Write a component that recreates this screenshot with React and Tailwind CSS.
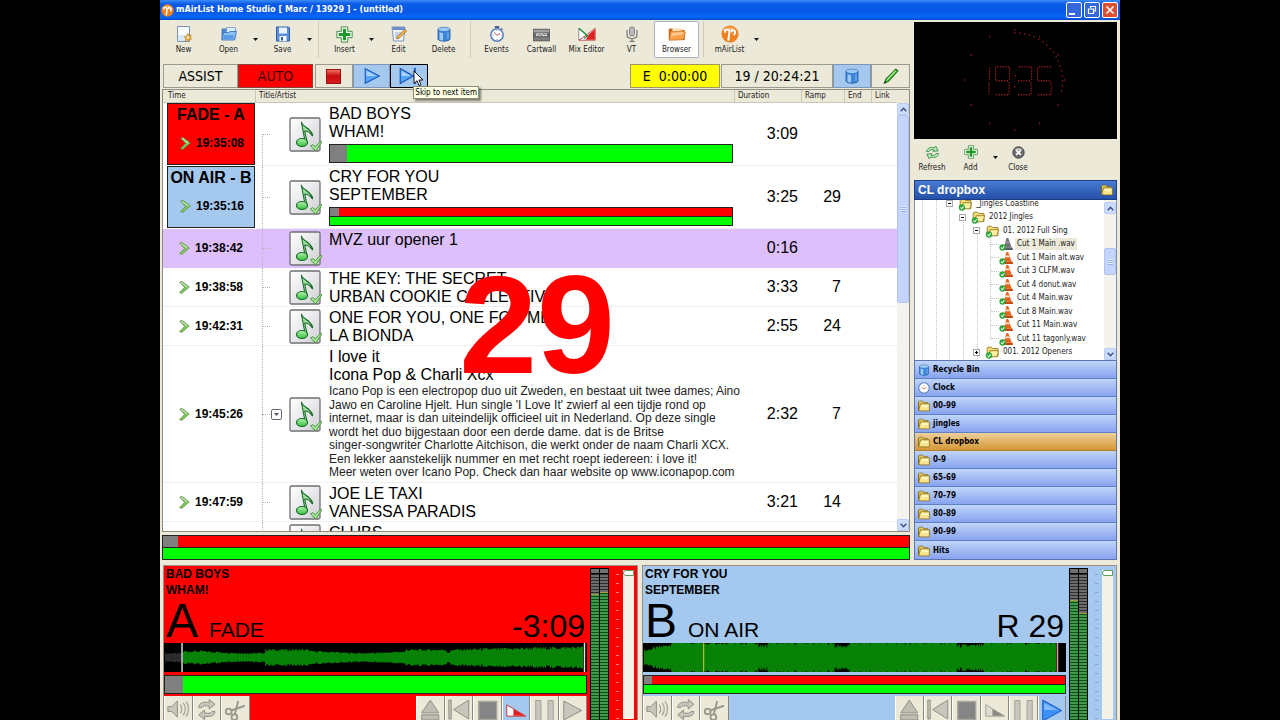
import React from 'react';

const UI = "font-['DejaVu_Sans_Condensed','Open_Sans',sans-serif]";
const ARIAL = "font-['Liberation_Sans',Arial,sans-serif]";

/* ---------- icons ---------- */

const Svg = ({ s = 16, children, className = '' }) => (
  <svg width={s} height={s} viewBox="0 0 16 16" className={`shrink-0 ${className}`} aria-hidden="true">
    {children}
  </svg>
);

const NewIcon = () => (
  <Svg>
    <path d="M1.5.5h12v15h-12z" fill="#f7fbff" stroke="#7d93b0" />
    <path d="M2 9h11v6H2z" fill="#dbe8f7" />
    <path d="M12 7.5l1 2.3 2.4-.6-1.2 2.1 1.6 1.7-2.4.3-.4 2.4-1.6-1.8-2.3.9.8-2.3-1.8-1.5 2.4-.6z" fill="#f2b43c" stroke="#b8761a" strokeWidth=".6" />
    <circle cx="12" cy="11.5" r="1.3" fill="#fff3c0" />
  </Svg>
);
const OpenIcon = () => (
  <Svg>
    <path d="M1 3h5l1 1.500h7V13H1z" fill="#4f8fd8" stroke="#2a62a8" strokeWidth=".7" />
    <path d="M5.500 1.500h9v6h-9z" fill="#dceafa" stroke="#5b8cc4" strokeWidth=".7" />
    <path d="M.7 14l1.800-7.500h5L9 5.500h6.500L13.500 14z" fill="#8fc0f2" stroke="#2f6fbd" strokeWidth=".8" />
    <path d="M2 13l1-4h10l-1 4z" fill="#5a9ee6" />
  </Svg>
);
const SaveIcon = () => (
  <Svg>
    <path d="M1.500 1h12l1 1v13h-13z" fill="#5b8fdc" stroke="#2f5ca8" />
    <path d="M4 1.500h8v6H4z" fill="#e8f1fc" />
    <path d="M4.500 10h7v5h-7z" fill="#f6f9fd" />
    <path d="M6 11h2v3.500H6z" fill="#2f5ca8" />
  </Svg>
);
const PlusIcon = ({ s = 17 }) => (
  <Svg s={s}>
    <path d="M5 .8h6V5h4.200v6H11v4.200H5V11H.8V5H5z" fill="#fff" stroke="#3c8c3c" strokeWidth=".9" strokeLinejoin="round" />
    <path d="M6.500 2.500h3v4h4v3h-4v4h-3v-4h-4v-3h4z" fill="#1f9a28" />
  </Svg>
);
const EditIcon = () => (
  <Svg>
    <path d="M1 1h13l-1.500 14h-10z" fill="#eef3fb" stroke="#6a7fa8" strokeWidth=".8" />
    <path d="M1 1h13l-.4 3H1.500z" fill="#6d8fd0" />
    <path d="M4 7h6M4 9h5M4 11h5" stroke="#8a9cc0" strokeWidth=".8" />
    <path d="M14 3.500l1.700 1.600-7.500 7-2.600.9.800-2.500z" fill="#f5b840" stroke="#8a5a1a" strokeWidth=".7" />
  </Svg>
);
const BinIcon = ({ s = 16 }) => (
  <Svg s={s}>
    <path d="M2 3.200C3 .6 13 .6 14 3.200v10c-1 2.600-11 2.600-12 0z" fill="#3f86d6" stroke="#1f57a0" strokeWidth=".8" />
    <ellipse cx="8" cy="3.200" rx="5.600" ry="1.900" fill="#9ccaf5" />
    <path d="M3.500 6v7.500c1 .7 2 .9 3.500 1V7C5.500 6.900 4.500 6.600 3.500 6z" fill="#9ccaf5" />
    <path d="M12 6.500v6.500" fill="none" stroke="#7ab4ee" strokeWidth="1.200" />
  </Svg>
);
const ClockIcon = ({ s = 16, top = true }) => (
  <Svg s={s}>
    {top && <path d="M6 0h4v2H6zM12.200 2l1.500 1.300-1 1z" fill="#50608a" stroke="#50608a" strokeWidth=".5" />}
    <circle cx="8" cy={top ? 9 : 8} r={top ? 6.2 : 7} fill="#fff" stroke="#5a7fc0" strokeWidth="1.500" />
    <path d="M5 6.500L8 9.300l3-2" fill="none" stroke="#c04848" strokeWidth=".9" />
    <path d="M8 4v1M8 13v1M3.500 9h1M11.500 9h1" stroke="#6a7894" strokeWidth=".8" />
  </Svg>
);
const CartIcon = () => (
  <Svg s={17}>
    <path d="M0 3h16v11H0z" fill="#6a6a6a" stroke="#3c3c3c" strokeWidth=".6" />
    <path d="M.5 3.500h15v2.500H.5z" fill="#a2a2a2" />
    <path d="M3 7h10v2.500H3z" fill="#e6e6e6" />
    <path d="M4 9.500l2-1.500 2 1 2-1.500 2 1" stroke="#444" fill="none" strokeWidth=".8" />
    <path d="M.5 11h15v2.500H.5z" fill="#808080" />
  </Svg>
);
const MixIcon = () => (
  <Svg s={18}>
    <path d="M.7 3v10.500L8 9z" fill="#fff" stroke="#777" strokeWidth=".7" />
    <path d="M15.300 3v10.500H1z" fill="#fff" stroke="#b03030" strokeWidth=".7" />
    <path d="M15 3.800V13H7L9.500 8.500z" fill="#e02020" />
    <path d="M.9 3l7.500 6.500L5.500 12" fill="none" stroke="#1e9040" strokeWidth="1.200" />
  </Svg>
);
const MicIcon = () => (
  <Svg>
    <rect x="5.500" y="1" width="5" height="9" rx="2.500" fill="#a8a8a8" stroke="#606060" strokeWidth=".7" />
    <path d="M7 2v7M9 2v7" stroke="#e8e8e8" strokeWidth=".6" />
    <path d="M3 4v4.500C3 11.500 5 12.500 8 12.500s5-1 5-4V4M8 12.500V15M5.500 15.300h5" fill="none" stroke="#777" strokeWidth="1.200" />
  </Svg>
);
const BrowserIcon = () => (
  <Svg s={18}>
    <path d="M1 3.500h5l1 1.200h7.500V13H1z" fill="#d9711a" stroke="#b0540c" strokeWidth=".6" />
    <path d="M4 2.500h8v4H4z" fill="#fde6c8" />
    <path d="M1.200 13.500L2.500 6l11.500-.800 1.500 1.500L13.500 13z" fill="#f7a24c" stroke="#d0701c" strokeWidth=".6" />
    <path d="M3 7l10.500-.700-.4 2L2.800 10z" fill="#fdc98c" />
  </Svg>
);
const MAirIcon = ({ s = 18 }) => (
  <Svg s={s}>
    <circle cx="8" cy="8" r="7.600" fill="#f08020" />
    <path d="M1.500 5.500a7.500 7.500 0 0 1 13 0C11 3.500 5 3.500 1.500 5.500z" fill="#f8a858" />
    <path d="M3 5.500c2-1.800 4-1.500 4.600 0L6.500 14M9 5c2-.8 3.800 0 3.500 1.800L11.500 9" fill="none" stroke="#fff" strokeWidth="1.800" />
    <path d="M3.200 3.800l.6 3.200M9 3.500l.6 3" fill="none" stroke="#fff" strokeWidth="1.200" />
  </Svg>
);
const RefreshIcon = () => (
  <Svg s={15}>
    <path d="M1.500 7C2 3.500 6 1.500 10 3.200l1.500-2 2.500 5-5.500.6 1-1.700C7 4.300 4.500 5 4 7z" fill="#bfe6bf" stroke="#2c8a3c" strokeWidth=".9" />
    <path d="M14.500 9c-.5 3.500-4.500 5.500-8.500 3.800l-1.500 2-2.500-5 5.500-.6-1 1.700c2.500.8 5 .1 5.500-1.900z" fill="#bfe6bf" stroke="#2c8a3c" strokeWidth=".9" />
  </Svg>
);
const CloseIcon = () => (
  <Svg s={13}>
    <circle cx="8" cy="8" r="7" fill="#6e6e6e" stroke="#333" />
    <path d="M3 5a6 6 0 0 1 10 0z" fill="#c8c8c8" />
    <path d="M5 5l6 6M11 5l-6 6" stroke="#fff" strokeWidth="2" />
  </Svg>
);
const FolderIcon = ({ s = 12 }) => (
  <Svg s={s}>
    <path d="M.8 14V3l1-1.500h4.500l1.500 2h5V5" fill="#e8cc60" stroke="#806818" />
    <path d="M.8 14V3" stroke="#806818" />
    <path d="M3.500 5h11.700v9.500H4.500L.8 14z" fill="#f6e48e" stroke="#806818" strokeLinejoin="round" />
    <path d="M5 7h8.500v2.500H5z" fill="#fff6c0" />
  </Svg>
);
const TreeFolderIcon = () => (
  <Svg s={14}>
    <path d="M2.500 13V3.500l1-1h4l1.300 1.500h6V13z" fill="#f3dc74" stroke="#8a7018" strokeWidth=".9" />
    <path d="M4 13.500l2-7h9.500l-1.800 7z" fill="#fff0a0" stroke="#8a7018" strokeWidth=".9" />
    <circle cx="4.500" cy="12" r="3.600" fill="#2fa53a" />
    <path d="M2.800 12l1.400 1.400 2.400-2.800" fill="none" stroke="#fff" strokeWidth="1.200" />
  </Svg>
);
const ConeIcon = ({ gray }) => (
  <Svg s={14}>
    <path d="M8.500 1h2l4 11h-9z" fill={gray ? '#707078' : '#e8641c'} />
    <path d="M7.500 5h4l.9 2.200H6.700z" fill={gray ? '#9a9aa2' : '#ffe9d8'} />
    <path d="M4 12h11.500l.5 2.800H3.500z" fill={gray ? '#5a5a60' : '#c8480c'} />
    <circle cx="4" cy="12" r="3.600" fill="#2fa53a" />
    <path d="M2.300 12l1.400 1.400 2.400-2.800" fill="none" stroke="#fff" strokeWidth="1.200" />
  </Svg>
);
const PencilIcon = () => (
  <Svg s={18}>
    <path d="M12.200 2l2 1.500-8.500 9.300L2 14.500l1.500-3.800z" fill="#4fc43c" stroke="#1d6e18" strokeWidth=".9" />
    <path d="M12 3.500L4.500 11.500" stroke="#b8f0a0" strokeWidth="1" />
    <path d="M2 14.500l.8-2 1.200 1.200z" fill="#222" />
  </Svg>
);
const ArrowIcon = () => (
  <svg width="11" height="13" viewBox="0 0 11 13" className="shrink-0" aria-hidden="true">
    <path d="M.7 1L3.200.5 10.300 6 2.700 12.500.5 11.500 5.500 6.500z" fill="#7fc45c" stroke="#5b8a48" strokeWidth=".7" />
    <path d="M2 1.300L8.500 6" stroke="#d8f5c8" strokeWidth="1" />
  </svg>
);
const NoteIcon = () => (
  <svg width="33" height="35" viewBox="0 0 33 35" className="shrink-0" aria-hidden="true">
    <defs>
      <linearGradient id="tile" x1="0" y1="0" x2="1" y2="1">
        <stop offset="0" stopColor="#ffffff" />
        <stop offset="1" stopColor="#cfd0d4" />
      </linearGradient>
      <linearGradient id="note" x1="0" y1="0" x2="0" y2="1">
        <stop offset="0" stopColor="#b8f0b0" />
        <stop offset="1" stopColor="#2fc03c" />
      </linearGradient>
    </defs>
    <rect x="1" y="1" width="30" height="33" rx="1.500" fill="url(#tile)" stroke="#6f6f74" strokeWidth="1.300" />
    <path d="M12.300 5c1 5 8.500 5.500 11.200 12.500.3 1 .1 1.800-.5 1-2.500-4-5-4.500-7.300-4.500l2.500 11.500-1.800.5z" fill="#9fe0a0" stroke="#176b2a" strokeWidth="1.100" strokeLinejoin="round" />
    <ellipse cx="13" cy="25.500" rx="5.500" ry="4" fill="url(#note)" stroke="#176b2a" strokeWidth="1.200" />
    <path d="M21.500 29l2-1.500 2.800 2.300L31.800 24l1 1-6 9z" fill="#a4e890" stroke="#3f8a38" strokeWidth=".9" />
  </svg>
);
const PlayIcon = () => (
  <Svg s={18}>
    <path d="M2 1.500L14.500 8 2 14.500z" fill="#58a4f4" stroke="#1a58c0" />
    <path d="M3 3.200L12 8H3z" fill="#a8d2fc" />
  </Svg>
);
const SkipIcon = () => (
  <Svg s={20}>
    <path d="M1 2l10.500 6L1 14z" fill="#58a4f4" stroke="#1a58c0" />
    <path d="M2 3.700L9.500 8H2z" fill="#a8d2fc" />
    <path d="M12.700 1.500v13" stroke="#1a58c0" strokeWidth="1.600" />
  </Svg>
);

/* ---------- toolbar ---------- */

const Tool = ({ icon, label, active, className = 'w-[45px]' }) => (
  <button
    type="button"
    className={`flex h-[37px] shrink-0 flex-col items-center justify-end gap-[1px] pb-[3px] text-[8px] leading-[10px] whitespace-nowrap text-[#222] ${
      active ? 'rounded-[2px] bg-white ring-1 ring-[#a8b4c4] ring-inset' : ''
    } ${className}`}
  >
    <span className="flex h-5 items-center">{icon}</span>
    {label}
  </button>
);
const Drop = ({ label }) => (
  <button type="button" aria-label={label} className="flex h-[37px] w-[9px] shrink-0 items-center justify-center">
    <svg width="5" height="3" viewBox="0 0 5 3"><path d="M0 0h5L2.500 3z" fill="#111" /></svg>
  </button>
);
const Sep = () => (
  <span className="flex h-[37px] w-2 shrink-0 justify-center"><span className="w-px bg-[#cfccbb]" /></span>
);

/* ---------- playlist ---------- */

const rows = [
  { h: 'h-[63px]', time: '19:35:08', state: 'FADE - A', box: 'bg-[#ff0000]', title: 'BAD BOYS', artist: 'WHAM!', dur: '3:09', bar: 'full', first: true },
  { h: 'h-[63px]', time: '19:35:16', state: 'ON AIR - B', box: 'bg-[#a4c8ee]', title: 'CRY FOR YOU', artist: 'SEPTEMBER', dur: '3:25', ramp: '29', bar: 'split' },
  { h: 'h-[39px]', time: '19:38:42', title: 'MVZ uur opener 1', dur: '0:16', tint: true },
  { h: 'h-[39px]', time: '19:38:58', title: 'THE KEY: THE SECRET', artist: 'URBAN COOKIE COLLECTIVE', dur: '3:33', ramp: '7' },
  { h: 'h-[39px]', time: '19:42:31', title: 'ONE FOR YOU, ONE FOR ME', artist: 'LA BIONDA', dur: '2:55', ramp: '24' },
  {
    h: 'h-[137px]', time: '19:45:26', title: 'I love it', artist: 'Icona Pop & Charli Xcx', dur: '2:32', ramp: '7',
    text: [
      'Icano Pop is een electropop duo uit Zweden, en bestaat uit twee dames; Aino',
      "Jawo en Caroline Hjelt. Hun single 'I Love It' zwierf al een tijdje rond op",
      'internet, maar is dan uiteindelijk officieel uit in Nederland. Op deze single',
      'wordt het duo bijgestaan door een derde dame. dat is de Britse',
      'singer-songwriter Charlotte Aitchison, die werkt onder de naam Charli XCX.',
      'Een lekker aanstekelijk nummer en met recht roept iedereen: i love it!',
      'Meer weten over Icano Pop. Check dan haar website op www.iconapop.com',
    ],
  },
  { h: 'h-[39px]', time: '19:47:59', title: 'JOE LE TAXI', artist: 'VANESSA PARADIS', dur: '3:21', ramp: '14' },
  { h: 'h-[39px]', title: 'CLUBS' },
];

const SplitBar = ({ gray, className }) => (
  <div className={`flex flex-col border border-[#222] ${className}`}>
    <div className="flex flex-1 border-b border-[#222] bg-[#ff0000]"><span className={`${gray} bg-[#808080]`} /></div>
    <div className="flex-1 bg-[#00ff00]" />
  </div>
);
const FullBar = ({ gray, className }) => (
  <div className={`flex border border-[#222] bg-[#00ff00] ${className}`}><span className={`${gray} bg-[#808080]`} /></div>
);

const Row = ({ r }) => {
  const line = r.tint ? 'border-[#dcbffb]' : 'border-[#f0f0f0]';
  return (
    <tr className={r.tint ? 'bg-[#dcbffb]' : 'bg-white'}>
      <td className="p-0 align-top">
        <div className={`flex ${r.h} pr-px pl-1 ${r.state ? 'pb-px' : `border-b ${line}`}`}>
          <div className={`flex flex-1 flex-col justify-center ${r.state ? `border border-[#222] pb-[2px] ${r.box}` : ''}`}>
            {r.state && <div className="-mt-1 text-center text-[16px] leading-[24px] font-bold whitespace-nowrap">{r.state}</div>}
            {r.time && (
              <div className={`flex items-center gap-[5px] pl-3 text-[12px] font-bold ${r.state ? 'h-8' : ''}`}>
                <ArrowIcon />
                {r.time}
              </div>
            )}
          </div>
        </div>
      </td>
      <td className="p-0 align-top">
        <div className={`flex ${r.h} border-b ${line}`}>
          <div className="relative flex w-[33px] shrink-0 items-center pl-1.5">
            <span className={`absolute bottom-0 left-1.5 border-l border-dotted border-[#b4b4b4] ${r.first ? 'top-1/2' : 'top-0'}`} />
            <span className="w-2 border-t border-dotted border-[#b4b4b4]" />
            {r.text && (
              <button type="button" aria-label="Collapse comment" className="ml-px flex size-[11px] items-center justify-center rounded-[2px] border border-[#667] bg-white">
                <svg width="5" height="3" viewBox="0 0 5 3"><path d="M0 0h5L2.500 3z" fill="#556" /></svg>
              </button>
            )}
          </div>
          <div className="flex shrink-0 items-center"><NoteIcon /></div>
          <div className="min-w-0 flex-1 pt-0.5 pr-0.5 pl-[7px] text-[16px] leading-[18px] whitespace-nowrap">
            <div>{r.title}</div>
            <div>{r.artist}</div>
            {r.bar === 'full' && <FullBar gray="w-[17px]" className="mt-[3px] h-[19px]" />}
            {r.bar === 'split' && <SplitBar gray="w-[9px]" className="mt-[3px] h-[19px]" />}
            {r.text && (
              <div className="grid h-[95px] auto-rows-fr text-[12px] leading-[14px] text-[#222]">
                {r.text.map((t) => <div key={t}>{t}</div>)}
              </div>
            )}
          </div>
        </div>
      </td>
      <td className={`border-b p-0 pr-1 text-right align-middle text-[16px] ${line}`}>{r.dur}</td>
      <td className={`border-b p-0 pr-1 text-right align-middle text-[16px] ${line}`}>{r.ramp}</td>
      <td className={`border-b p-0 ${line}`} />
      <td className={`border-b p-0 ${line}`} />
    </tr>
  );
};

const ScrollBtn = ({ up }) => (
  <button type="button" aria-label={up ? 'Scroll up' : 'Scroll down'} className="flex h-3 w-full shrink-0 items-center justify-center rounded-[2px] border border-[#b8ccf4] bg-[#ccdcfc]">
    <svg width="7" height="5" viewBox="0 0 7 5">
      <path d={up ? 'M.7 4.300L3.500 1.300l2.800 3' : 'M.7.7l2.800 3 2.800-3'} fill="none" stroke="#35508a" strokeWidth="1.400" />
    </svg>
  </button>
);

/* ---------- clock ---------- */

const SEGMENTS = {
  1: 'bc', 3: 'abcdg', 5: 'acdfg', 9: 'abcdfg',
};
const digitDots = (d, x) => {
  const out = [];
  const s = SEGMENTS[d];
  for (let i = 0; i < 5; i++) {
    const h = x + 2 + i * 2.7;
    if (s.includes('a')) out.push([h, 44]);
    if (s.includes('g')) out.push([h - 1, 58]);
    if (s.includes('d')) out.push([h - 1, 72]);
    const v = i * 2.7;
    if (s.includes('f')) out.push([x, 45.5 + v]);
    if (s.includes('b')) out.push([x + 14, 45.5 + v]);
    if (s.includes('c')) out.push([x + 13.5, 60 + v]);
  }
  return out;
};
const LedClock = () => {
  const dots = [...digitDots(1, 61), ...digitDots(9, 81), ...digitDots(3, 103), ...digitDots(5, 123), [101, 53], [100, 64]];
  const ring = [];
  for (let i = 0; i < 18; i++) {
    const a = (i * 6 * Math.PI) / 180;
    ring.push([100 + 48 * Math.sin(a), 58 - 48 * Math.cos(a)]);
  }
  const marks = [];
  for (let i = 0; i < 12; i++) {
    const a = (i * 30 * Math.PI) / 180;
    marks.push([100 + 50 * Math.sin(a), 58 - 50 * Math.cos(a)]);
  }
  return (
    <div className="flex h-[117px] shrink-0 justify-center bg-black">
      <svg width="203" height="117" viewBox="0 0 203 117" role="img" aria-label="19:35">
        {dots.map(([x, y], i) => <rect key={i} x={x} y={y} width="1.200" height="1.500" fill="#981c1c" />)}
        {ring.map(([x, y], i) => <rect key={i} x={x} y={y} width="1.200" height="1.500" fill="#901a1a" />)}
        {marks.map(([x, y], i) => <rect key={i} x={x} y={y - 1} width="1.200" height="2" fill="#701818" />)}
      </svg>
    </div>
  );
};

/* ---------- browser tree ---------- */

const tree = [
  { pad: 'pl-[31px]', kind: 'folder', box: '-', label: '_Jingles Coastline' },
  { pad: 'pl-[44px]', kind: 'folder', box: '-', label: '2012 Jingles' },
  { pad: 'pl-[58px]', kind: 'folder', box: '-', label: '01. 2012 Full Sing' },
  { pad: 'pl-[76px]', kind: 'gray', label: 'Cut 1 Main .wav', sel: true },
  { pad: 'pl-[76px]', kind: 'cone', label: 'Cut 1 Main alt.wav' },
  { pad: 'pl-[76px]', kind: 'cone', label: 'Cut 3 CLFM.wav' },
  { pad: 'pl-[76px]', kind: 'cone', label: 'Cut 4 donut.wav' },
  { pad: 'pl-[76px]', kind: 'cone', label: 'Cut 4 Main.wav' },
  { pad: 'pl-[76px]', kind: 'cone', label: 'Cut 8 Main.wav' },
  { pad: 'pl-[76px]', kind: 'cone', label: 'Cut 11 Main.wav' },
  { pad: 'pl-[76px]', kind: 'cone', label: 'Cut 11 tagonly.wav' },
  { pad: 'pl-[58px]', kind: 'folder', box: '+', label: '001. 2012 Openers' },
];

const TreeGuides = () => (
  <svg width="90" height="160" viewBox="0 0 90 160" className="absolute top-0 left-0" aria-hidden="true">
    <path d="M7.500 0v160M21.500 0v160M34.500 0v160M48.500 20v140M62.500 34v126M75.500 38v101" stroke="#c4c4c4" strokeDasharray="1 1" fill="none" />
  </svg>
);

const panels = ['Recycle Bin', 'Clock', '00-99', 'jingles', 'CL dropbox', '0-9', '65-69', '70-79', '80-89', '90-99', 'Hits'];

/* ---------- players ---------- */

const noise = (i) => {
  const v = Math.sin(i * 12.9898) * 43758.5453;
  return v - Math.floor(v);
};
const wavePath = (from, to, amp) => {
  let d = '';
  for (let x = from; x < to; x++) {
    const a = amp(x) * (0.78 + 0.3 * noise(x));
    d += `M${x + 0.5} ${(14.5 - a).toFixed(1)}V${(14.5 + a).toFixed(1)}`;
  }
  return d;
};
const ampA = (x) => {
  if (x > 100 && x < 145) return 8;
  if (x > 240 && x < 282) return 8;
  if (x > 285) return 8 + (x - 285) / 50;
  return 5.5 + Math.sin(x / 18);
};
const ampB = (x) => {
  if (x < 28) return 7 + x / 4;
  if ((x > 114 && x < 124) || (x > 190 && x < 206)) return 12;
  if (x > 312 && x < 340) return 12.5;
  return 16.5;
};

const WaveA = () => (
  <svg viewBox="0 0 422 29" preserveAspectRatio="none" className="block h-[29px] w-full bg-black" aria-hidden="true">
    <path d={wavePath(1, 18, () => 4.5)} stroke="#2c2c2c" />
    <path d={wavePath(19, 418, ampA)} stroke="#078207" strokeWidth="1.200" />
    <path d="M18 0v29M419.500 0v29" stroke="#e4e4e4" strokeWidth="1.400" />
  </svg>
);
const WaveB = () => (
  <svg viewBox="0 0 422 29" preserveAspectRatio="none" className="block h-[29px] w-full bg-black" aria-hidden="true">
    <path d={wavePath(1, 412, ampB)} stroke="#078207" strokeWidth="1.200" />
    <path d="M60.500 0v29" stroke="#b8c020" strokeWidth="1.200" />
    <path d="M413.500 0v29" stroke="#d890a0" strokeWidth="1.600" />
  </svg>
);

const G = '#a5a398';
const deckLeft = [
  ['Monitor', <g key="s"><path d="M3 10h4l6-6v17l-6-6H3z" fill="#c9c7bd" stroke="#8e8c82" /><path d="M16 8c2 2 2 7 0 9M19 6c3 3 3 10 0 13M22 4.500c3.500 4 3.500 12 0 16" fill="none" stroke={G} strokeWidth="1.300" /></g>],
  ['Loop', <g key="l"><path d="M5 11c0-5 6-7 11-5V2.500l6 5-6 5V9.500c-4-1-7-.5-8 1.500z" fill="#c9c7bd" stroke="#8e8c82" /><path d="M22 15c0 5-6 6-11 5v3.500l-6-5 6-5v3c4 1 7 .5 8-1.500z" fill="#c9c7bd" stroke="#8e8c82" /></g>],
  ['Cut', <g key="c" fill="none" stroke="#9b998f" strokeWidth="2"><circle cx="7" cy="15" r="3" /><circle cx="13" cy="21" r="3" /><path d="M9.500 14L24 9M13.500 18L17 4" /></g>],
];
const deckRight = (active) => [
  ['Eject', false, <g key="e" fill="#bfbdb3" stroke="#8e8c82"><path d="M14 3l9 13.500H5zM5 18.500h18V24H5z" /></g>],
  ['Previous', false, <g key="p" fill="#c9c7bd" stroke="#8e8c82"><path d="M24 3v20L8 13zM3 3h2.500v20H3z" /></g>],
  ['Stop', false, <g key="st"><path d="M5 4.500h19v19H5z" fill="#858585" stroke="#a8a69c" strokeWidth="1.500" /></g>],
  ['Fade', active === 'Fade', active === 'Fade'
    ? <g key="f"><path d="M4 8v12h20z" fill="#fff" stroke="#c03030" /><path d="M11 12.500v7h12z" fill="#e02020" /></g>
    : <g key="f"><path d="M4 8v12h20z" fill="#deddd4" stroke="#a09e94" /><path d="M11 12.500v7h12z" fill="#8a8880" /></g>],
  ['Pause', false, <g key="pa" fill="#c9c7bd" stroke="#a09e94"><path d="M5 3.500h5.500v21H5zM18 3.500h5.500v21H18z" /></g>],
  ['Play', active === 'Play', active === 'Play'
    ? <g key="pl"><path d="M4 3l20 11L4 25z" fill="#3c92f8" stroke="#1450b8" /><path d="M5.500 6L20 13.500H5.500z" fill="#80bcfc" /></g>
    : <g key="pl"><path d="M4 4l19 10L4 24z" fill="#c9c7bd" stroke="#8e8c82" /></g>],
];
const DeckBtn = ({ label, on, children }) => (
  <button type="button" aria-label={label} className={`h-[29px] flex-1 border-r border-l border-r-[#8a887c] border-l-white ${on ? 'bg-[#a4c8ee]' : 'bg-[#ece9d8]'}`}>
    <svg viewBox="0 0 28 28" className="h-full w-full">{children}</svg>
  </button>
);

const Meter = ({ tops }) => (
  <div className="flex w-[19px] gap-px border border-black bg-black">
    {tops.map((t, i) => (
      <div key={i} className="flex flex-1 flex-col bg-[repeating-linear-gradient(#0a4d16_0_1px,#3f9a4c_1px_3px)]">
        <div className="h-1 bg-[#707070]" />
        <div className="h-px bg-black" />
        <div className={`${t} border-b border-[#a8a040] bg-[repeating-linear-gradient(#2c2c2c_0_1px,#6c6c6c_1px_3px)]`} />
      </div>
    ))}
  </div>
);

const Player = ({ deck, bg, tick, title, artist, state, time, wave, bar, tops, active }) => (
  <section className={`flex h-[170px] min-w-0 flex-1 gap-[3px] border border-[#9a8f86] ${bg}`} aria-label={`Player ${deck}`}>
    <div className="min-w-0 flex-1">
      <div className="pl-0.5 text-[12px] leading-4 font-bold">
        <div>{title}</div>
        <div>{artist}</div>
      </div>
      <div className="flex h-[45px] items-baseline pr-0.5 pl-0.5 leading-[45px]">
        <span className="w-[43px] text-[48px]">{deck}</span>
        <span className="flex-1 text-[21px]">{state}</span>
        <span className="text-[32px]">{time}</span>
      </div>
      {wave}
      <div className="pt-[3px] pb-[2px]">{bar}</div>
      <div className="flex justify-between">
        <div className="flex w-[86px]">
          {deckLeft.map(([l, g]) => <DeckBtn key={l} label={l}>{g}</DeckBtn>)}
        </div>
        <div className="flex w-[171px]">
          {deckRight(active).map(([l, on, g]) => <DeckBtn key={l} label={l} on={on}>{g}</DeckBtn>)}
        </div>
      </div>
    </div>
    <div className="flex pt-0.5"><Meter tops={tops} /></div>
    <div className="flex w-[25px] items-start justify-end gap-1 pt-1 pr-[3px]">
      <span className={`mt-1 h-[146px] w-[3px] ${tick}`} />
      <input
        type="range"
        aria-label={`Volume ${deck}`}
        defaultValue={100}
        className="h-[149px] w-[11px] appearance-none bg-[#f4f2e6] [direction:rtl] [writing-mode:vertical-lr] [&::-webkit-slider-thumb]:h-[6px] [&::-webkit-slider-thumb]:w-[11px] [&::-webkit-slider-thumb]:appearance-none [&::-webkit-slider-thumb]:rounded-l-[3px] [&::-webkit-slider-thumb]:border [&::-webkit-slider-thumb]:border-[#5a9a60] [&::-webkit-slider-thumb]:bg-white"
      />
    </div>
  </section>
);

/* ---------- page ---------- */

export default function App() {
  return (
    <div className={`h-screen overflow-hidden bg-black px-[12.5%] text-black ${UI}`}>
      <div className="flex h-full min-w-0 flex-col bg-[#ece9d8]">
        <header className="flex h-5 shrink-0 items-center gap-[2px] bg-[linear-gradient(#3c8cf8,#0a5ae8_20%,#0458e8_60%,#0868f8_85%,#0448c8)] pr-[2px] pl-[1px]">
          <MAirIcon s={13} />
          <h1 className="min-w-0 flex-1 truncate text-[9px] font-bold text-white">mAirList Home Studio [ Marc / 13929 ] - (untitled)</h1>
          <div className="flex gap-[2px]">
            <button type="button" aria-label="Minimize" className="flex size-4 items-end justify-center rounded-[2px] border border-white bg-[#3468dc] pb-[2px]">
              <span className="mr-1 h-[2px] w-[6px] bg-white" />
            </button>
            <button type="button" aria-label="Restore" className="flex size-4 items-center justify-center rounded-[2px] border border-white bg-[#3468dc]">
              <svg width="10" height="10" viewBox="0 0 10 10"><path d="M3.500 3V1.500h5v4.500H7M1.500 4h5v4.500h-5z" fill="none" stroke="#fff" strokeWidth="1.200" /></svg>
            </button>
            <button type="button" aria-label="Close" className="flex size-4 items-center justify-center rounded-[2px] border border-white bg-[#dc5030]">
              <svg width="10" height="10" viewBox="0 0 10 10"><path d="M1.500 1.500l7 7M8.500 1.500l-7 7" stroke="#fff" strokeWidth="1.700" /></svg>
            </button>
          </div>
        </header>

        <div className="flex min-h-0 flex-1 gap-1 pr-[3px]">
          <main className="flex min-w-0 flex-1 flex-col">
            <div className="flex h-11 shrink-0 items-start pt-[1px] pl-px" role="toolbar" aria-label="Main">
              <Tool icon={<NewIcon />} label="New" />
              <Tool icon={<OpenIcon />} label="Open" />
              <Drop label="Open options" />
              <Tool icon={<SaveIcon />} label="Save" />
              <Drop label="Save options" />
              <Sep />
              <Tool icon={<PlusIcon />} label="Insert" />
              <Drop label="Insert options" />
              <Tool icon={<EditIcon />} label="Edit" />
              <Tool icon={<BinIcon />} label="Delete" />
              <Sep />
              <Tool icon={<ClockIcon />} label="Events" />
              <Tool icon={<CartIcon />} label="Cartwall" />
              <Tool icon={<MixIcon />} label="Mix Editor" />
              <Tool icon={<MicIcon />} label="VT" />
              <Tool icon={<BrowserIcon />} label="Browser" active />
              <Sep />
              <Tool icon={<MAirIcon />} label="mAirList" />
              <Drop label="mAirList options" />
            </div>

            <div className="flex h-[25px] shrink-0 items-start justify-between pl-[3px] text-[14px]">
              <div className="flex h-6">
                <button type="button" className="w-[75px] border border-[#9c9a8c]">ASSIST</button>
                <button type="button" className="w-[75px] border border-[#8a4038] bg-[#ff0000] text-[#400000]">AUTO</button>
                <div className="ml-[2px] flex w-[113px]">
                  <button type="button" aria-label="Stop" className="flex flex-1 items-center justify-center border border-[#9c9a8c]">
                    <span className="size-[15px] border border-[#9c1010] bg-[linear-gradient(#f07060,#c80c10_45%,#d81c1c)]" />
                  </button>
                  <button type="button" aria-label="Play" className="flex flex-1 items-center justify-center border border-[#7e96b4] bg-[#a4c8ee]"><PlayIcon /></button>
                  <button type="button" aria-label="Skip to next item" className="relative flex flex-1 items-center justify-center border border-black bg-[#a4c8ee]">
                    <SkipIcon />
                    <svg width="11" height="17" viewBox="0 0 11 17" className="absolute top-[5px] left-[22px] z-20">
                      <path d="M1 1v12.500l3-2.800 2 5 2-.9-2-4.800h4z" fill="#fff" stroke="#000" strokeWidth=".9" />
                    </svg>
                    <span role="tooltip" className="absolute top-[21px] left-[22px] z-20 border border-[#8a8a78] bg-[#ffffe4] px-[1px] text-[8px] leading-[11px] whitespace-nowrap shadow-[2px_2px_2px_rgba(0,0,0,0.45)]">
                      Skip to next item
                    </span>
                  </button>
                </div>
              </div>
              <div className="flex h-6">
                <div className="flex w-[90px] items-center justify-center border border-[#9c9a60] bg-[#ffff00] whitespace-pre">E  0:00:00</div>
                <div className="ml-px flex w-[112px] items-center justify-center border border-[#9c9a8c] whitespace-nowrap">19 / 20:24:21</div>
                <button type="button" aria-label="Recycle bin" className="flex w-[38px] items-center justify-center border border-[#7e96b4] bg-[#a4c8ee]"><BinIcon /></button>
                <button type="button" aria-label="Edit mode" className="flex w-[39px] items-center justify-center border border-[#9c9a8c]"><PencilIcon /></button>
              </div>
            </div>

            <div className="relative flex min-h-0 flex-1 flex-col gap-[3px] pb-[5px] pl-[2px]">
              <div className="flex min-h-0 flex-1 border border-[#8c8c84] bg-white">
                <div className="min-w-0 flex-1 overflow-hidden">
                  <table className={`w-full table-fixed border-separate border-spacing-0 ${ARIAL}`}>
                    <colgroup>
                      <col className="w-[93px]" />
                      <col />
                      <col className="w-[67px]" />
                      <col className="w-[43px]" />
                      <col className="w-[27px]" />
                      <col className="w-[25px]" />
                    </colgroup>
                    <thead>
                      <tr className={`h-[13px] bg-[#ece9d8] text-left text-[8px] leading-[12px] text-[#222] ${UI}`}>
                        <th className="border-r border-b border-[#cbc7b8] p-0 pl-[5px] font-normal">Time</th>
                        <th className="border-r border-b border-[#cbc7b8] p-0 pl-[3px] font-normal">Title/Artist</th>
                        <th className="border-r border-b border-[#cbc7b8] p-0 pl-[3px] font-normal">Duration</th>
                        <th className="border-r border-b border-[#cbc7b8] p-0 pl-[3px] font-normal">Ramp</th>
                        <th className="border-r border-b border-[#cbc7b8] p-0 pl-[3px] font-normal">End</th>
                        <th className="border-b border-[#cbc7b8] p-0 pl-[3px] font-normal">Link</th>
                      </tr>
                    </thead>
                    <tbody>{rows.map((r) => <Row key={r.title} r={r} />)}</tbody>
                  </table>
                </div>
                <div className="flex w-3 shrink-0 flex-col bg-[#f4f3ee]">
                  <div className="h-[13px] shrink-0 bg-[#ece9d8]" />
                  <ScrollBtn up />
                  <div className="flex h-[188px] items-center justify-center rounded-[2px] border border-[#b0c4f0] bg-[#c4d4fc]">
                    <span className="h-[6px] w-[5px] bg-[repeating-linear-gradient(#e8f0ff_0_1px,#94b0e8_1px_2px)]" />
                  </div>
                  <div className="flex-1" />
                  <ScrollBtn />
                </div>
              </div>
              <SplitBar gray="w-[15px]" className="h-[25px] shrink-0" />
              <div className={`pointer-events-none absolute inset-0 z-10 flex items-center justify-center pb-1 pl-1 text-[140px] leading-none font-bold text-[#ff0000] ${ARIAL}`}>29</div>
            </div>
          </main>

          <aside className="flex w-[203px] shrink-0 flex-col pt-[2px] pb-[5px]">
            <LedClock />
            <div className="flex h-[41px] shrink-0 items-start" role="toolbar" aria-label="Browser">
              <Tool icon={<RefreshIcon />} label="Refresh" className="w-[36px]" />
              <Tool icon={<PlusIcon s={14} />} label="Add" className="w-[41px]" />
              <Drop label="Add options" />
              <Tool icon={<CloseIcon />} label="Close" className="w-[36px]" />
            </div>
            <div className={`flex h-5 shrink-0 items-center justify-between border border-[#1c3c88] bg-[linear-gradient(#4a7cd4,#2450a8)] px-[3px] text-[12px] font-bold text-white ${ARIAL}`}>
              <h2>CL dropbox</h2>
              <FolderIcon />
            </div>
            <div className="flex min-h-0 flex-1 border-x border-[#8090b0] bg-white">
              <div className="relative min-w-0 flex-1 overflow-hidden">
                <TreeGuides />
                <ul className="relative -mt-[3px] grid h-[162px] auto-rows-fr">
                  {tree.map((n) => (
                    <li key={n.label} className={`flex items-center text-[8px] leading-[12px] whitespace-nowrap text-[#222] ${n.pad}`}>
                      {n.box && (
                        <button type="button" aria-label={n.box === '-' ? 'Collapse' : 'Expand'} className="mr-[5px] flex size-[7px] shrink-0 items-center justify-center border border-[#a8a8a8] bg-white">
                          <svg width="3" height="3" viewBox="0 0 3 3"><path d={n.box === '-' ? 'M0 1.500h3' : 'M0 1.500h3M1.500 0v3'} stroke="#000" /></svg>
                        </button>
                      )}
                      {n.kind !== 'folder' && <span className="w-2 shrink-0 border-t border-dotted border-[#c4c4c4]" />}
                      {n.kind === 'folder' ? <TreeFolderIcon /> : <ConeIcon gray={n.kind === 'gray'} />}
                      <span className={`ml-[2px] px-[2px] ${n.sel ? 'bg-[#ece9d8]' : ''}`}>{n.label}</span>
                    </li>
                  ))}
                </ul>
              </div>
              <div className="flex w-3 shrink-0 flex-col bg-[#f4f3ee] pt-[2px]">
                <ScrollBtn up />
                <div className="h-[34px]" />
                <div className="flex h-[27px] items-center justify-center rounded-[2px] border border-[#b0c4f0] bg-[#c4d4fc]">
                  <span className="h-[6px] w-[5px] bg-[repeating-linear-gradient(#e8f0ff_0_1px,#94b0e8_1px_2px)]" />
                </div>
                <div className="flex-1" />
                <ScrollBtn />
              </div>
            </div>
            <nav className="shrink-0 border border-[#5c74b0]" aria-label="Browser pages">
              {panels.map((p, i) => (
                <button
                  key={p}
                  type="button"
                  className={`flex h-[18px] w-full items-center gap-[3px] border-b pt-px pl-[3px] text-[8px] font-bold last:border-b-0 ${
                    p === 'CL dropbox'
                      ? 'border-[#b08030] bg-[linear-gradient(#ecd09c,#dca850_70%,#d49838)]'
                      : 'border-[#6080c4] bg-[linear-gradient(#c0d6f8,#a4bcf4_50%,#88a4f0)]'
                  }`}
                >
                  {i === 0 ? <BinIcon s={12} /> : i === 1 ? <ClockIcon s={12} top={false} /> : <FolderIcon />}
                  {p}
                </button>
              ))}
            </nav>
          </aside>
        </div>

        <div className={`flex h-[155px] shrink-0 gap-1 overflow-hidden px-[3px] ${ARIAL}`}>
          <Player
            deck="A" bg="bg-[#ff0000]" tick="bg-[repeating-linear-gradient(#f08080_0_1px,transparent_1px_9px)]"
            title="BAD BOYS" artist="WHAM!" state="FADE" time="-3:09"
            wave={<WaveA />} bar={<FullBar gray="w-[18px]" className="h-[19px]" />}
            tops={['h-[21px]', 'h-[19px]']} active="Fade"
          />
          <Player
            deck="B" bg="bg-[#a4c8ee]" tick="bg-[repeating-linear-gradient(#84a4cc_0_1px,transparent_1px_9px)]"
            title="CRY FOR YOU" artist="SEPTEMBER" state="ON AIR" time="R 29"
            wave={<WaveB />} bar={<SplitBar gray="w-[8px]" className="h-[19px]" />}
            tops={['h-[27px]', 'h-[40px]']} active="Play"
          />
        </div>
      </div>
    </div>
  );
}
